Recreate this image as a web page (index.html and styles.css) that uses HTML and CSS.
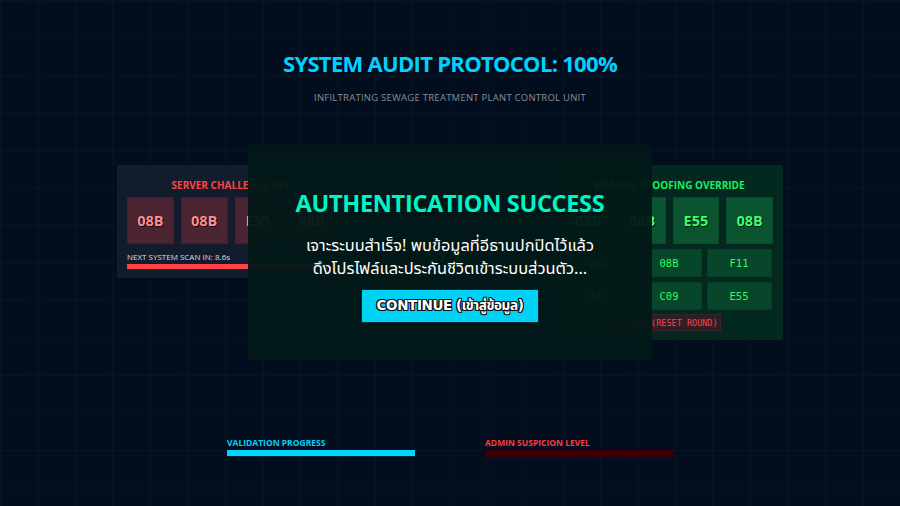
FILE: index.html
```html
<!DOCTYPE html>
<html lang="th">
<head>
<meta charset="utf-8">
<title>System Audit Protocol</title>
<link rel="stylesheet" href="styles.css">
</head>
<body>
<div class="screen">
  <header class="head">
    <h1 class="title">SYSTEM AUDIT PROTOCOL: 100%</h1>
    <p class="subtitle">INFILTRATING SEWAGE TREATMENT PLANT CONTROL UNIT</p>
  </header>

  <main class="arena">
    <section class="panel panel-server">
      <h2 class="panel-title title-red">SERVER CHALLENGE KEY</h2>
      <div class="cells">
        <div class="cell cell-red">08B</div>
        <div class="cell cell-red">08B</div>
        <div class="cell cell-red">E55</div>
        <div class="cell cell-red">08B</div>
      </div>
      <div class="scan-label">NEXT SYSTEM SCAN IN: 8.6s</div>
      <div class="scan-track"><div class="scan-fill" style="width:100%"></div></div>
    </section>

    <div class="sync">SYNC</div>

    <section class="panel panel-manual">
      <h2 class="panel-title title-green">MANUAL SPOOFING OVERRIDE</h2>
      <div class="cells">
        <div class="cell cell-green">08B</div>
        <div class="cell cell-green">08B</div>
        <div class="cell cell-green">E55</div>
        <div class="cell cell-green">08B</div>
      </div>
      <div class="keypad">
        <button class="key">001</button>
        <button class="key">08B</button>
        <button class="key">F11</button>
        <button class="key">A42</button>
        <button class="key">C09</button>
        <button class="key">E55</button>
      </div>
      <button class="clear">CLEAR (RESET ROUND)</button>
    </section>
  </main>

  <footer class="meters">
    <div class="meter">
      <div class="meter-label label-cyan">VALIDATION PROGRESS</div>
      <div class="meter-track track-cyan"><div class="meter-fill fill-cyan" style="width:100%"></div></div>
    </div>
    <div class="meter">
      <div class="meter-label label-red">ADMIN SUSPICION LEVEL</div>
      <div class="meter-track track-red"><div class="meter-fill fill-red" style="width:0%"></div></div>
    </div>
  </footer>

  <div class="modal">
    <h2 class="modal-title">AUTHENTICATION SUCCESS</h2>
    <p class="modal-text">เจาะระบบสำเร็จ! พบข้อมูลที่อีธานปกปิดไว้แล้ว<br>ดึงโปรไฟล์และประกันชีวิตเข้าระบบส่วนตัว...</p>
    <button class="continue">CONTINUE (เข้าสู่ข้อมูล)</button>
  </div>
</div>
</body>
</html>
```

FILE: styles.css
```css
* { box-sizing: border-box; }

html, body {
  margin: 0;
  padding: 0;
}

body {
  width: 900px;
  height: 506px;
  overflow: hidden;
  background-color: #020d1e;
  background-image:
    linear-gradient(rgba(60, 140, 200, 0.06) 1px, transparent 1px),
    linear-gradient(90deg, rgba(60, 140, 200, 0.06) 1px, transparent 1px);
  background-size: 37.5px 37.5px;
  font-family: "Open Sans", "Noto Sans Thai", "Noto Sans", sans-serif;
  color: #fff;
}

.screen {
  position: relative;
  display: flow-root;
  width: 900px;
  height: 506px;
}

.head {
  text-align: center;
}

.title {
  margin: 50px 0 0;
  font-size: 22px;
  line-height: 26px;
  font-weight: 700;
  color: #00d2ff;
  letter-spacing: -0.7px;
}

.subtitle {
  margin: 16px 0 0;
  font-size: 9.5px;
  line-height: 12px;
  color: #8a8e96;
  letter-spacing: 0.25px;
}

.arena {
  display: flex;
  justify-content: center;
  align-items: flex-start;
  margin-top: 61px;
}

.panel {
  width: 228px;
  padding: 13px 10px 9px;
}

.panel-server { background: #131c2c; }
.panel-manual { background: #03281f; }

.panel-title {
  margin: 0;
  font-size: 10px;
  line-height: 14px;
  font-weight: 700;
  text-align: center;
}

.title-red { color: #ff4242; }
.title-green { color: #17f060; }

.cells {
  display: grid;
  grid-template-columns: repeat(4, 1fr);
  gap: 7px;
  margin-top: 5px;
}

.cell {
  height: 47px;
  display: flex;
  align-items: center;
  justify-content: center;
  font-size: 14.5px;
  font-weight: 700;
  text-shadow: 0 0 1px #000, 1px 1px 0 rgba(0,0,0,0.6);
}

.cell-red {
  background: #4a2531;
  border: 1px solid #3e2029;
  color: #ff8f8f;
}

.cell-green {
  background: #0b5430;
  border: 1px solid #0a4a2a;
  color: #3dff6e;
}

.scan-label {
  margin-top: 8px;
  font-size: 8px;
  line-height: 10px;
  color: #d8dce2;
}

.scan-track {
  margin-top: 2px;
  height: 5px;
  background: #3a1016;
}

.scan-fill {
  height: 100%;
  background: #ff4246;
}

.sync {
  width: 210px;
  align-self: center;
  text-align: center;
  padding-top: 8px;
  font-size: 17px;
  font-weight: 800;
  color: #0f8a3c;
}

.keypad {
  display: grid;
  grid-template-columns: repeat(3, 65px);
  gap: 5px;
  justify-content: center;
  margin-top: 5px;
}

.key {
  height: 28px;
  padding: 0;
  background: #07462a;
  border: 1px solid #063e25;
  color: #29ff5e;
  font-family: "DejaVu Sans Mono", "Liberation Mono", monospace;
  font-size: 10.5px;
}

.clear {
  display: block;
  margin: 4px auto 0;
  height: 17px;
  width: 104px;
  padding: 0;
  background: #2f1e24;
  border: 1px solid #3a2228;
  color: #ff3e48;
  font-family: "DejaVu Sans Mono", "Liberation Mono", monospace;
  font-size: 8.5px;
}

.meters {
  display: flex;
  justify-content: center;
  gap: 70px;
  margin-top: 98px;
}

.meter { width: 188px; }

.meter-label {
  font-size: 8.5px;
  line-height: 10px;
  font-weight: 700;
}

.label-cyan { color: #00d2ff; }
.label-red { color: #ff3b3b; }

.meter-track {
  margin-top: 2px;
  height: 7px;
}

.track-cyan { background: #00394a; border-bottom: 1px solid #002533; }
.track-red { background: #3a0006; }

.meter-fill { height: 100%; }
.fill-cyan { background: #00d4ff; }
.fill-red { background: #ff3b3b; }

.modal {
  position: absolute;
  left: 248px;
  top: 145px;
  width: 404px;
  height: 215px;
  background: rgba(2, 24, 23, 0.95);
  display: flex;
  flex-direction: column;
  align-items: center;
  padding-top: 44px;
}

.modal-title {
  margin: 0;
  font-size: 23.5px;
  line-height: 28px;
  font-weight: 700;
  color: #00f5c6;
  letter-spacing: -0.3px;
}

.modal-text {
  margin: 18px 0 0;
  font-family: "Noto Sans Thai", "Open Sans", sans-serif;
  font-size: 16.4px;
  line-height: 23px;
  text-align: center;
  color: #ffffff;
}

.continue {
  margin-top: 8px;
  width: 178px;
  height: 34px;
  padding: 0;
  background: #00d2f5;
  border: 1px solid #012a33;
  color: #ffffff;
  font-family: "DejaVu Sans", "Noto Sans Thai", sans-serif;
  font-size: 13.5px;
  font-weight: 700;
  letter-spacing: -0.4px;
  text-shadow: 1px 0 0 #111, -1px 0 0 #111, 0 1px 0 #111, 0 -1px 0 #111, 1px 1px 0 #111, -1px -1px 0 #111, 1px -1px 0 #111, -1px 1px 0 #111;
}
```
